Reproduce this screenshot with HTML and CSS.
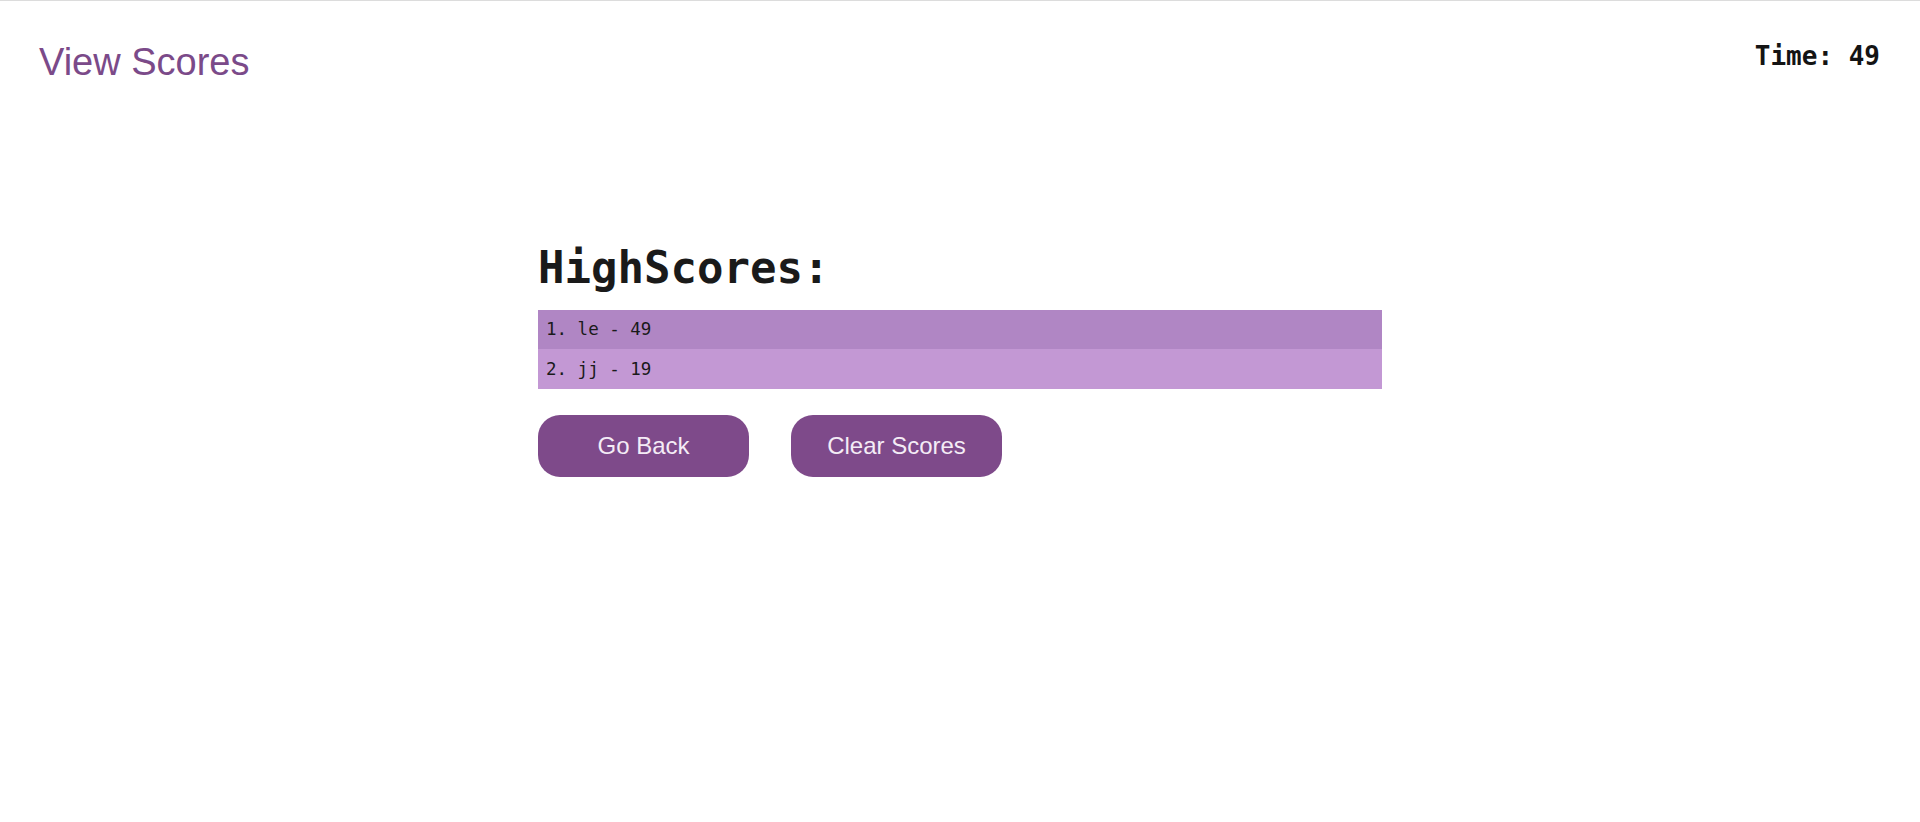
FILE: index.html
```html
<!DOCTYPE html>
<html lang="en">
<head>
<meta charset="utf-8">
<title>HighScores</title>
<link rel="stylesheet" href="styles.css">
</head>
<body>
  <header class="top-bar">
    <a class="view-scores" href="#">View Scores</a>
    <div class="timer">Time: 49</div>
  </header>
  <main class="scores">
    <h1 class="scores-title">HighScores:</h1>
    <ol class="score-list">
      <li class="score-item odd">1. le - 49</li>
      <li class="score-item even">2. jj - 19</li>
    </ol>
    <div class="actions">
      <button class="btn">Go Back</button>
      <button class="btn">Clear Scores</button>
    </div>
  </main>
</body>
</html>
```

FILE: styles.css
```css
html, body {
  margin: 0;
  padding: 0;
  background: #ffffff;
}

body {
  border-top: 1px solid #dcdcdc;
  font-family: "Liberation Sans", Arial, sans-serif;
}

.top-bar {
  display: flex;
  justify-content: space-between;
  align-items: flex-start;
  padding: 0 40px 0 39px;
}

.view-scores {
  margin-top: 39px;
  font-size: 38px;
  line-height: 44px;
  color: #7b4a89;
  text-decoration: none;
}

.timer {
  margin-top: 40px;
  font-family: "DejaVu Sans Mono", monospace;
  font-weight: bold;
  font-size: 26px;
  line-height: 30px;
  color: #141414;
}

.scores {
  width: 844px;
  margin: 0 auto;
}

.scores-title {
  margin: 159px 0 17px 0;
  font-family: "DejaVu Sans Mono", monospace;
  font-weight: bold;
  font-size: 44px;
  line-height: 50px;
  color: #1a1a1a;
}

.score-list {
  list-style: none;
  margin: 0;
  padding: 0;
}

.score-item {
  height: 40px;
  line-height: 40px;
  padding-left: 8px;
  font-family: "DejaVu Sans Mono", monospace;
  font-size: 17.5px;
  color: #1a1a1a;
}

.score-item.odd {
  background: #b086c4;
  height: 39px;
  line-height: 39px;
}

.score-item.even {
  background: #c398d4;
}

.actions {
  display: flex;
  gap: 42px;
  margin-top: 26px;
}

.btn {
  width: 211px;
  height: 62px;
  border: none;
  border-radius: 22px;
  background: #7e4a8a;
  color: #f4ecf6;
  font-family: "Liberation Sans", Arial, sans-serif;
  font-size: 24px;
  cursor: pointer;
}
```
